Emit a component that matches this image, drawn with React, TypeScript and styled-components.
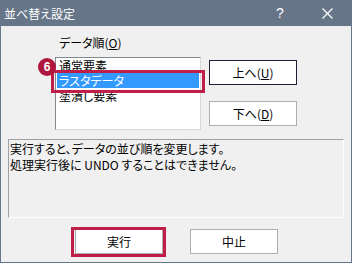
import React from 'react';
import styled, { createGlobalStyle } from 'styled-components';

const GlobalStyle = createGlobalStyle`
  html, body {
    margin: 0;
    padding: 0;
    background: #ffffff;
  }
  body {
    font-family: "Noto Sans CJK JP", "Noto Sans", sans-serif;
    font-size: 12px;
    font-feature-settings: "palt";
    color: #000;
  }
  u {
    text-underline-offset: 1px;
  }
`;

const Window = styled.div`
  width: 352px;
  height: 263px;
  box-sizing: border-box;
  border: 1px solid #667588;
  border-top: none;
  display: flex;
  flex-direction: column;
  background: #f0f0f0;
`;

const TitleBar = styled.div`
  height: 26px;
  flex-shrink: 0;
  background: #667588;
  color: #ffffff;
  display: flex;
  align-items: center;
  padding-left: 3px;
  font-size: 12px;
`;

const Title = styled.span`
  flex: 1;
  line-height: 15px;
`;

const Help = styled.span`
  width: 14px;
  margin-right: 32px;
  font-family: "Liberation Sans", sans-serif;
  font-size: 14px;
  line-height: 14px;
`;

const CloseIcon = styled.svg`
  width: 11px;
  height: 11px;
  margin-right: 18px;
`;

const Body = styled.div`
  flex: 1;
  display: flex;
  flex-direction: column;
  padding: 9px 7px 0 7px;
`;

const TopSection = styled.div`
  display: flex;
  gap: 8px;
  margin-left: 47px;
`;

const ListColumn = styled.div`
  display: flex;
  flex-direction: column;
  gap: 7px;
`;

const Label = styled.div`
  padding-left: 4px;
  line-height: 15px;
`;

const ListWrap = styled.div`
  position: relative;
  width: 146px;
  height: 73px;
`;

const ListBox = styled.ul`
  list-style: none;
  margin: 0;
  padding: 0;
  box-sizing: border-box;
  width: 100%;
  height: 100%;
  background: #ffffff;
  border: 1px solid #828790;
  border-right-color: #d8d8d8;
  border-bottom-color: #d8d8d8;
  overflow: hidden;
`;

const ListItem = styled.li<{ $selected?: boolean }>`
  height: 15px;
  line-height: 15px;
  padding-left: 2px;
  margin: 0 1px;
  background: ${(p) => (p.$selected ? '#3399ff' : 'transparent')};
  color: ${(p) => (p.$selected ? '#ffffff' : '#000000')};
`;

const Highlight = styled.div`
  position: absolute;
  left: -4px;
  top: 13px;
  width: 154px;
  height: 23px;
  box-sizing: border-box;
  border: 3px solid #be1e48;
`;

const Badge = styled.div`
  position: absolute;
  left: -17px;
  top: 1px;
  width: 18px;
  height: 18px;
  border-radius: 50%;
  background: #b0173f;
  color: #ffffff;
  font-family: "Liberation Sans", sans-serif;
  font-weight: bold;
  font-size: 12px;
  line-height: 18px;
  text-align: center;
`;

const ButtonColumn = styled.div`
  display: flex;
  flex-direction: column;
  gap: 16px;
  padding-top: 25px;
`;

const Button = styled.button<{ $default?: boolean }>`
  width: 88px;
  height: 25px;
  box-sizing: border-box;
  padding: 0;
  background: #ffffff;
  border: 1px solid ${(p) => (p.$default ? '#1b2036' : '#adadad')};
  font-family: inherit;
  font-size: 12px;
  font-feature-settings: "palt";
  color: #000;
  line-height: 15px;
`;

const Description = styled.div`
  margin-top: 9px;
  height: 79px;
  box-sizing: border-box;
  border: 1px solid #a0a0a0;
  border-right-color: #ffffff;
  border-bottom-color: #ffffff;
  padding: 1px 0 0 1px;
  line-height: 16px;
`;

const ActionRow = styled.div`
  display: flex;
  gap: 27px;
  margin-top: 11px;
  margin-left: 67px;
`;

const Marked = styled.div`
  position: relative;
`;

const ButtonFrame = styled.div`
  position: absolute;
  left: -4px;
  top: -2px;
  right: -3px;
  bottom: -3px;
  border: 3px solid #be1e48;
  pointer-events: none;
`;

export default function App() {
  return (
    <>
      <GlobalStyle />
      <Window>
        <TitleBar>
          <Title>並べ替え設定</Title>
          <Help>?</Help>
          <CloseIcon viewBox="0 0 11 11">
            <path d="M0.5 0.5 L10.5 10.5 M10.5 0.5 L0.5 10.5" stroke="#ffffff" strokeWidth="1.2" />
          </CloseIcon>
        </TitleBar>
        <Body>
          <TopSection>
            <ListColumn>
              <Label>
                データ順(<u>O</u>)
              </Label>
              <ListWrap>
                <ListBox>
                  <ListItem>通常要素</ListItem>
                  <ListItem $selected>ラスタデータ</ListItem>
                  <ListItem>塗潰し要素</ListItem>
                </ListBox>
                <Highlight />
                <Badge>6</Badge>
              </ListWrap>
            </ListColumn>
            <ButtonColumn>
              <Button $default>
                上へ(<u>U</u>)
              </Button>
              <Button>
                下へ(<u>D</u>)
              </Button>
            </ButtonColumn>
          </TopSection>
          <Description>
            実行すると、データの並び順を変更します。
            <br />
            処理実行後に UNDO することはできません。
          </Description>
          <ActionRow>
            <Marked>
              <Button>実行</Button>
              <ButtonFrame />
            </Marked>
            <Button>中止</Button>
          </ActionRow>
        </Body>
      </Window>
    </>
  );
}
